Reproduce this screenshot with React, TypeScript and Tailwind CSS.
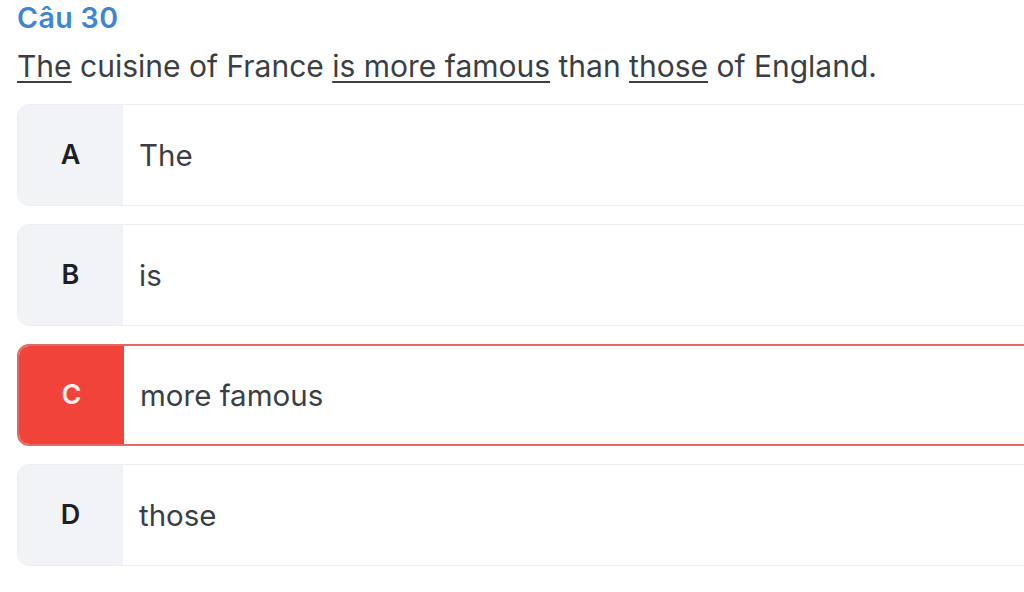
const options = [
  { key: "A", text: "The", state: "idle" },
  { key: "B", text: "is", state: "idle" },
  { key: "C", text: "more famous", state: "wrong" },
  { key: "D", text: "those", state: "idle" },
] as const;

export default function App() {
  return (
    <div className="h-[592px] w-[1024px] overflow-hidden bg-white pl-[17px] font-['Inter',sans-serif]">
      <div className="pt-[2px] text-[28.5px] leading-[32px] font-semibold tracking-[0.4px] text-[#3d86d4]">
        Câu 30
      </div>
      <div className="mt-[15px] text-[30px] leading-[34px] text-[#3b3f45]">
        <u className="underline decoration-[2px] underline-offset-[4px]">The</u>{" "}
        cuisine of France{" "}
        <u className="underline decoration-[2px] underline-offset-[4px]">
          is more famous
        </u>{" "}
        than{" "}
        <u className="underline decoration-[2px] underline-offset-[4px]">those</u>{" "}
        of England.
      </div>
      <div className="mt-[21px] flex w-[1060px] flex-col gap-[18px]">
        {options.map((o) => (
          <OptionRow key={o.key} label={o.key} text={o.text} wrong={o.state === "wrong"} />
        ))}
      </div>
    </div>
  );
}

function OptionRow({
  label,
  text,
  wrong,
}: {
  label: string;
  text: string;
  wrong: boolean;
}) {
  return (
    <div
      className={
        wrong
          ? "flex h-[102px] overflow-hidden rounded-[12px] border-2 border-[#e26a66] bg-white"
          : "flex h-[102px] overflow-hidden rounded-[12px] border border-[#eceef2] bg-white"
      }
    >
      <div
        className={
          wrong
            ? "flex w-[105px] items-center justify-center bg-[#f2433a] text-[27px] font-semibold text-[#fdf0ec]"
            : "flex w-[105px] items-center justify-center bg-[#f1f3f7] text-[27px] font-semibold text-[#1c1f26]"
        }
      >
        {label}
      </div>
      <div className="flex items-center pl-[16px] text-[29.5px] text-[#3b3f45]">{text}</div>
    </div>
  );
}
